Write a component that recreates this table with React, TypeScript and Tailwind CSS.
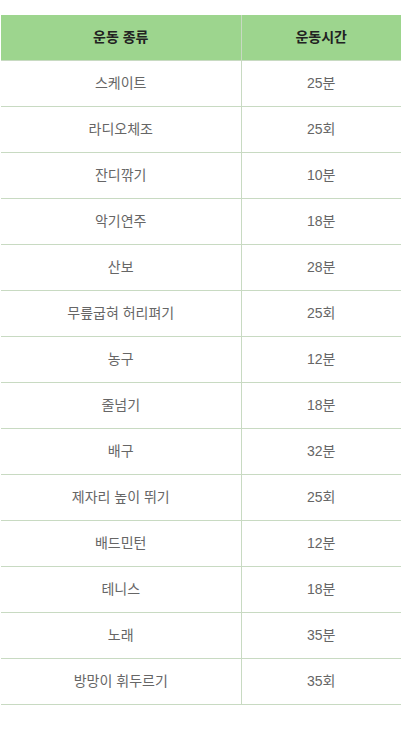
const rows: [string, string][] = [
  ['스케이트', '25분'],
  ['라디오체조', '25회'],
  ['잔디깎기', '10분'],
  ['악기연주', '18분'],
  ['산보', '28분'],
  ['무릎굽혀 허리펴기', '25회'],
  ['농구', '12분'],
  ['줄넘기', '18분'],
  ['배구', '32분'],
  ['제자리 높이 뛰기', '25회'],
  ['배드민턴', '12분'],
  ['테니스', '18분'],
  ['노래', '35분'],
  ['방망이 휘두르기', '35회'],
]

export default function App() {
  return (
    <div className="min-h-[739px] bg-white pt-[15px] pl-px font-['Liberation_Sans','Noto_Sans_CJK_KR',sans-serif]">
      <table className="w-[400px] border-collapse text-[14px]">
        <thead>
          <tr className="bg-[#9dd58e]">
            <th className="h-[45px] w-[240px] border-b border-r border-[#c8dac2] font-bold text-[#222]">
              운동 종류
            </th>
            <th className="h-[45px] border-b border-[#c8dac2] font-bold text-[#222]">운동시간</th>
          </tr>
        </thead>
        <tbody>
          {rows.map(([name, time]) => (
            <tr key={name}>
              <td className="h-[46px] border-b border-r border-[#c8dac2] text-center text-[#666]">
                {name}
              </td>
              <td className="h-[46px] border-b border-[#c8dac2] text-center text-[#666]">{time}</td>
            </tr>
          ))}
        </tbody>
      </table>
    </div>
  )
}
